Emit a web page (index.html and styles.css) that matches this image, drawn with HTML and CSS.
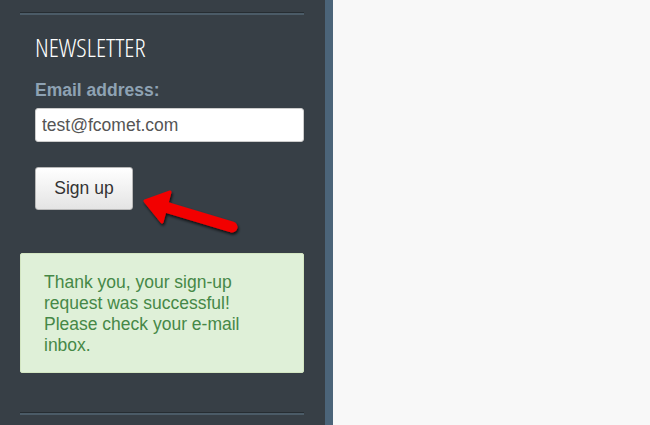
FILE: index.html
```html
<!DOCTYPE html>
<html lang="en">
<head>
    <meta charset="UTF-8">
    <meta name="viewport" content="width=device-width, initial-scale=1.0">
    <title>Newsletter</title>
    <link rel="stylesheet" href="styles.css">
</head>
<body>
    <div class="page">
        <div class="sidebar">
            <div class="separator"></div>

            <div class="newsletter">
                <h2>NEWSLETTER</h2>
                <label for="email">Email address:</label>
                <input type="text" id="email" value="test@fcomet.com">
                <button>Sign up</button>
            </div>

            <div class="success">
                Thank you, your sign-up request was successful! Please check your e-mail inbox.
            </div>

            <div class="separator bottom"></div>

            <!-- flecha roja sobre el botón -->
            <svg class="arrow" width="110" height="55" viewBox="138 183 110 55">
                <defs>
                    <filter id="sombra" x="-20%" y="-20%" width="140%" height="150%">
                        <feGaussianBlur in="SourceAlpha" stdDeviation="1.5"/>
                        <feOffset dx="1" dy="2" result="b"/>
                        <feComponentTransfer><feFuncA type="linear" slope="0.8"/></feComponentTransfer>
                        <feMerge><feMergeNode/><feMergeNode in="SourceGraphic"/></feMerge>
                    </filter>
                </defs>
                <g filter="url(#sombra)" fill="#f20000" stroke="#f20000">
                    <line x1="232" y1="227" x2="162" y2="206" stroke-width="11" stroke-linecap="round"/>
                    <polygon points="145,201 170,192 162,222" stroke-width="3" stroke-linejoin="round"/>
                </g>
            </svg>
        </div>
        <div class="main"></div>
    </div>
</body>
</html>
```

FILE: styles.css
```css
body {
    margin: 0;
    font-family: "Liberation Sans", Arial, sans-serif;
    background-color: #f8f8f8;
}
.page {
    display: flex;
    height: 425px;
    overflow: hidden;
}
.sidebar {
    position: relative;
    width: 284px;
    flex-shrink: 0;
    padding: 12px 21px 0 20px;
    background-color: #373f46;
    border-right: 8px solid #4b6479;
}
.main {
    flex: 1;
    background-color: #f8f8f8;
}
.separator {
    height: 0;
    border-top: 1px solid #262d32;
    border-bottom: 2px solid #4b5b67;
}
.separator.bottom {
    margin-top: 39px;
}
.newsletter {
    padding: 0 0 0 15px;
}
.newsletter h2 {
    margin: 17px 0 0 0;
    font-family: "Open Sans", "DejaVu Sans Condensed", sans-serif;
    font-weight: 300;
    font-stretch: condensed;
    font-size: 26px;
    line-height: 30px;
    color: #ffffff;
}
.newsletter label {
    display: block;
    margin-top: 18px;
    font-size: 17.5px;
    font-weight: bold;
    color: #8ea2b3;
    line-height: 20px;
}
.newsletter input {
    display: block;
    width: 269px;
    height: 34px;
    margin-top: 8px;
    padding: 0 6px;
    box-sizing: border-box;
    border: 1px solid #cccccc;
    border-radius: 3px;
    background-color: white;
    font-family: "Liberation Sans", Arial, sans-serif;
    font-size: 17.5px;
    color: #555555;
}
.newsletter button {
    display: block;
    width: 98px;
    height: 43px;
    margin-top: 25px;
    border: 1px solid #b8b8b8;
    border-radius: 3px;
    background: linear-gradient(#ffffff, #e4e4e4);
    font-family: "Liberation Sans", Arial, sans-serif;
    font-size: 17.5px;
    color: #333333;
}
.success {
    margin-top: 43px;
    padding: 18px 45px 16px 23px;
    border: 1px solid #d3e6c2;
    border-radius: 2px;
    background-color: #dff0d8;
    color: #468847;
    font-size: 17.5px;
    line-height: 21px;
}
.arrow {
    position: absolute;
    left: 138px;
    top: 183px;
}
```
